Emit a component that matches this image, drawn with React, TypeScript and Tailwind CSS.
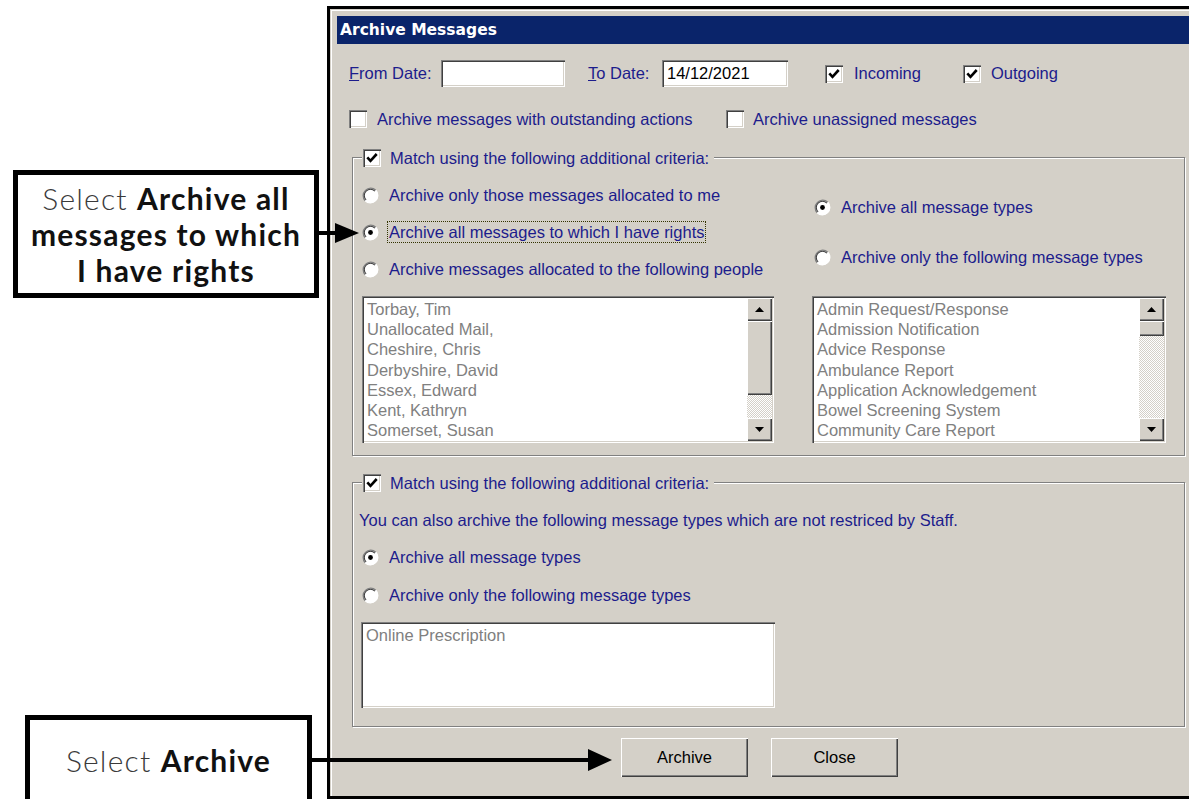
import React from "react";

const raised =
  "shadow-[inset_1px_1px_#ffffff,inset_-1px_-1px_#404040,inset_-2px_-2px_#808080]";
const sunken =
  "shadow-[inset_1px_1px_#808080,inset_2px_2px_#404040,inset_-1px_-1px_#ffffff,inset_-2px_-2px_#d4d0c8]";
const etched =
  "border border-[#808080] shadow-[inset_1px_1px_#ffffff,1px_1px_#ffffff]";
const label = "text-[#1c1c8c] whitespace-nowrap leading-none";

function CheckBox({ checked }: { checked?: boolean }) {
  return (
    <span className={`flex w-[18px] h-[18px] shrink-0 bg-white ${sunken}`}>
      {checked && (
        <svg viewBox="0 0 18 18" className="w-full h-full">
          <path
            d="M4.3 8.3 L7.5 11.8 L13.7 5"
            fill="none"
            stroke="#000"
            strokeWidth="2.6"
          />
        </svg>
      )}
    </span>
  );
}

function Radio({ on }: { on?: boolean }) {
  return (
    <svg width="17" height="17" viewBox="0 0 17 17" className="shrink-0">
      <circle cx="8.5" cy="8.5" r="7.5" fill="#ffffff" />
      <path d="M3.2 13.8 A7.5 7.5 0 0 1 13.8 3.2" fill="none" stroke="#808080" strokeWidth="1.3" />
      <path d="M4.1 12.9 A6.2 6.2 0 0 1 12.9 4.1" fill="none" stroke="#404040" strokeWidth="1.1" />
      <path d="M13.8 3.2 A7.5 7.5 0 0 1 3.2 13.8" fill="none" stroke="#ffffff" strokeWidth="1.3" />
      {on && <circle cx="8.5" cy="8.5" r="2.4" fill="#000" />}
    </svg>
  );
}

function ScrollButton({ up }: { up?: boolean }) {
  return (
    <div className={`h-[23px] shrink-0 flex items-center justify-center bg-[#d4d0c8] ${raised}`}>
      <svg width="9" height="5" viewBox="0 0 9 5">
        <path d={up ? "M0 5 L4.5 0 L9 5Z" : "M0 0 L4.5 5 L9 0Z"} fill="#000" />
      </svg>
    </div>
  );
}

function ScrollBar({ thumb, track }: { thumb: number; track: number }) {
  return (
    <div className="w-[25px] shrink-0 flex flex-col">
      <ScrollButton up />
      <div className={`shrink-0 bg-[#d4d0c8] ${raised}`} style={{ height: thumb }} />
      <div
        className="shrink-0 bg-[image:repeating-conic-gradient(#d4d0c8_0_25%,#ffffff_0_50%)] bg-[length:2px_2px]"
        style={{ height: track }}
      />
      <ScrollButton />
    </div>
  );
}

function ListBox({
  items,
  className,
  bar,
}: {
  items: string[];
  className: string;
  bar?: { thumb: number; track: number };
}) {
  return (
    <div className={`flex bg-white p-[2px] ${sunken} ${className}`}>
      <div className="flex-1 pl-[3px] pt-[1px] text-[#808080] text-[16.5px] leading-[20.2px] overflow-hidden">
        {items.map((t) => (
          <div key={t} className="whitespace-nowrap">
            {t}
          </div>
        ))}
      </div>
      {bar && <ScrollBar thumb={bar.thumb} track={bar.track} />}
    </div>
  );
}

function RadioRow({
  on,
  text,
  focus,
}: {
  on?: boolean;
  text: string;
  focus?: boolean;
}) {
  return (
    <div className="h-[22px] flex items-center">
      <Radio on={on} />
      <span
        className={`ml-[8px] h-[22px] flex items-center px-[1px] border border-dotted ${
          focus ? "border-[#333300]" : "border-transparent"
        } ${label}`}
      >
        {text}
      </span>
    </div>
  );
}

function Legend() {
  return (
    <div className="-mt-[9px] ml-[9px] w-fit h-[18px] flex items-center bg-[#d4d0c8] pl-[1px] pr-[5px]">
      <CheckBox checked />
      <span className={`ml-[9px] ${label}`}>Match using the following additional criteria:</span>
    </div>
  );
}

const people = [
  "Torbay, Tim",
  "Unallocated Mail,",
  "Cheshire, Chris",
  "Derbyshire, David",
  "Essex, Edward",
  "Kent, Kathryn",
  "Somerset, Susan",
];

const types = [
  "Admin Request/Response",
  "Admission Notification",
  "Advice Response",
  "Ambulance Report",
  "Application Acknowledgement",
  "Bowel Screening System",
  "Community Care Report",
];

const callout =
  "absolute border-[5px] border-black bg-white font-['Lato',sans-serif] text-[30px] leading-[36px] tracking-[1.2px] text-[#111]";

export default function App() {
  return (
    <div className="relative w-[1189px] h-[799px] overflow-hidden bg-white font-['Liberation_Sans',Arial,sans-serif] text-[16.5px]">
      {/* dialog window */}
      <div className="ml-[327px] mt-[6px] w-[862px] h-[793px] border-l-[3px] border-t-[3px] border-b-[3px] border-black bg-[#d4d0c8]">
        <div className="h-full pt-[7px] pl-[7px] shadow-[inset_1px_1px_#d4d0c8,inset_2px_2px_#ffffff]">
          <div className="h-[28px] bg-[#0a246a] flex items-center pl-[3px] pt-[2px] text-white font-bold text-[15.5px] font-['DejaVu_Sans',Verdana,sans-serif]">
            Archive Messages
          </div>

          <div className="pl-[12px]">
            {/* dates and direction */}
            <div className="mt-[16px] h-[27px] flex items-center">
              <span className={`w-[92px] ${label}`}>
                <u>F</u>rom Date:
              </span>
              <div className={`w-[124px] h-[27px] bg-white ${sunken}`} />
              <span className={`ml-[23px] w-[74px] ${label}`}>
                <u>T</u>o Date:
              </span>
              <div className={`w-[126px] h-[27px] bg-white flex items-center pl-[5px] text-black ${sunken}`}>
                14/12/2021
              </div>
              <div className="ml-[37px]">
                <CheckBox checked />
              </div>
              <span className={`ml-[11px] w-[109px] ${label}`}>Incoming</span>
              <CheckBox checked />
              <span className={`ml-[10px] ${label}`}>Outgoing</span>
            </div>

            {/* extra options */}
            <div className="mt-[23px] h-[18px] flex items-center">
              <CheckBox />
              <span className={`ml-[10px] w-[349px] ${label}`}>Archive messages with outstanding actions</span>
              <CheckBox />
              <span className={`ml-[9px] ${label}`}>Archive unassigned messages</span>
            </div>

            {/* first criteria group */}
            <div className={`mt-[29px] ml-[3px] w-[833px] h-[299px] ${etched}`}>
              <Legend />
              <div className="flex mt-[17px] pl-[9px]">
                <div className="w-[450px] flex flex-col">
                  <div className="flex flex-col gap-[15px]">
                    <RadioRow text="Archive only those messages allocated to me" />
                    <RadioRow on focus text="Archive all messages to which I have rights" />
                    <RadioRow text="Archive messages allocated to the following people" />
                  </div>
                  <ListBox
                    items={people}
                    className="mt-[16px] w-[412px] h-[147px]"
                    bar={{ thumb: 74, track: 23 }}
                  />
                </div>
                <div className="flex flex-col">
                  <div className="mt-[12px] ml-[2px] flex flex-col gap-[28px]">
                    <RadioRow on text="Archive all message types" />
                    <RadioRow text="Archive only the following message types" />
                  </div>
                  <ListBox
                    items={types}
                    className="mt-[28px] w-[354px] h-[147px]"
                    bar={{ thumb: 15, track: 82 }}
                  />
                </div>
              </div>
            </div>

            {/* second criteria group */}
            <div className={`mt-[26px] ml-[3px] w-[833px] h-[245px] ${etched}`}>
              <Legend />
              <div className="pl-[6px] mt-[18px] h-[20px] flex items-center">
                <span className={label}>
                  You can also archive the following message types which are not restriced by Staff.
                </span>
              </div>
              <div className="pl-[9px] mt-[16px] flex flex-col gap-[16px]">
                <RadioRow on text="Archive all message types" />
                <RadioRow text="Archive only the following message types" />
              </div>
              <ListBox items={["Online Prescription"]} className="ml-[8px] mt-[16px] w-[414px] h-[86px]" />
            </div>

            {/* buttons */}
            <div className="mt-[11px] flex">
              <button className={`ml-[272px] w-[127px] h-[39px] bg-[#d4d0c8] text-black ${raised}`}>Archive</button>
              <button className={`ml-[23px] w-[127px] h-[39px] bg-[#d4d0c8] text-black ${raised}`}>Close</button>
            </div>
          </div>
        </div>
      </div>

      {/* callout: radio choice */}
      <div className={`${callout} left-[13px] top-[170px] w-[306px] h-[128px] flex flex-col items-center justify-center`}>
        <div>
          <span className="font-light text-[#3a3a3a]">Select </span>
          <b>Archive all</b>
        </div>
        <b>messages to which</b>
        <b>I have rights</b>
      </div>
      <svg className="absolute left-[318px] top-[222px]" width="44" height="22" viewBox="0 0 44 22">
        <rect x="0" y="9" width="19" height="4" fill="#000" />
        <path d="M17 1 L41 11 L17 21Z" fill="#000" />
      </svg>

      {/* callout: archive button */}
      <div className={`${callout} left-[25px] top-[715px] w-[287px] h-[110px] flex justify-center pt-[22px]`}>
        <div>
          <span className="font-light text-[#3a3a3a]">Select </span>
          <b>Archive</b>
        </div>
      </div>
      <svg className="absolute left-[311px] top-[748px]" width="303" height="24" viewBox="0 0 303 24">
        <rect x="0" y="10" width="280" height="4" fill="#000" />
        <path d="M277 1 L301 12 L277 23Z" fill="#000" />
      </svg>
    </div>
  );
}
